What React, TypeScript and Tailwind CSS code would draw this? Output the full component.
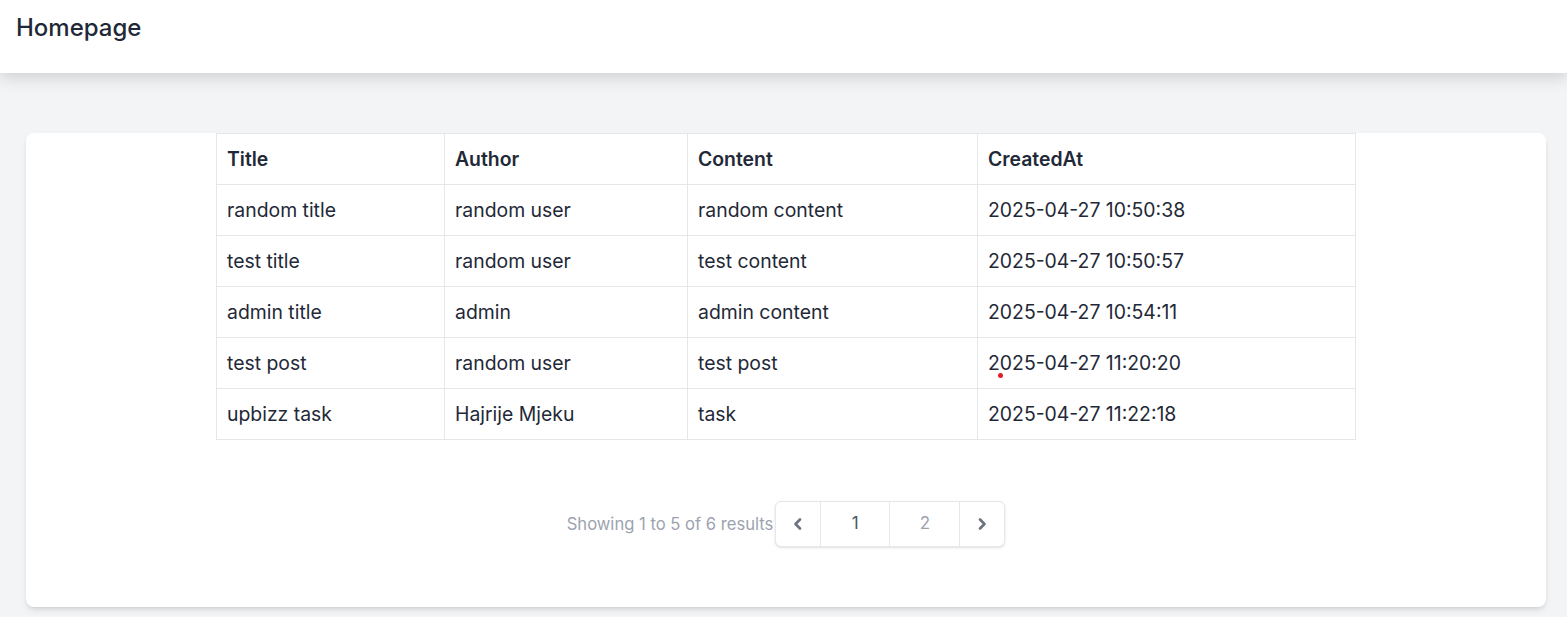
import React from 'react';

type Post = {
    title: string;
    author: string;
    content: string;
    createdAt: string;
};

const posts: Post[] = [
    { title: 'random title', author: 'random user', content: 'random content', createdAt: '2025-04-27 10:50:38' },
    { title: 'test title', author: 'random user', content: 'test content', createdAt: '2025-04-27 10:50:57' },
    { title: 'admin title', author: 'admin', content: 'admin content', createdAt: '2025-04-27 10:54:11' },
    { title: 'test post', author: 'random user', content: 'test post', createdAt: '2025-04-27 11:20:20' },
    { title: 'upbizz task', author: 'Hajrije Mjeku', content: 'task', createdAt: '2025-04-27 11:22:18' },
];

const cell = 'border border-[#e5e7eb] px-[10px] py-3 leading-[26px] text-left';

function Chevron({ dir }: { dir: 'left' | 'right' }) {
    return (
        <svg viewBox="0 0 20 20" fill="none" stroke="currentColor" strokeWidth={2.6} strokeLinecap="round" strokeLinejoin="round" className="w-5 h-5">
            {dir === 'left' ? <path d="M12 5.5 7.5 10l4.5 4.5" /> : <path d="M8 5.5l4.5 4.5L8 14.5" />}
        </svg>
    );
}

export default function App() {
    return (
        <div className="min-h-screen bg-[#f3f4f6] text-[#1f2937]" style={{ fontFamily: 'Inter, "Noto Sans", sans-serif' }}>
            {/* Header */}
            <header className="relative z-10 bg-white shadow-[0_4px_16px_rgba(0,0,0,0.16)]">
                <div className="h-[73px] px-4 pt-3">
                    <h2 className="text-2xl font-medium leading-8 text-[#1f2937]">Homepage</h2>
                </div>
            </header>

            <main className="pl-[26px] pr-[21px] pt-[60px]">
                <div className="relative bg-white rounded-lg shadow-md overflow-hidden">
                    <table className="w-[1140px] mx-auto border-collapse text-[19.4px] text-[#1f2937] table-fixed">
                        <colgroup>
                            <col className="w-[228px]" />
                            <col className="w-[243px]" />
                            <col className="w-[290px]" />
                            <col />
                        </colgroup>
                        <thead>
                            <tr>
                                <th className={`${cell} font-semibold`}>Title</th>
                                <th className={`${cell} font-semibold`}>Author</th>
                                <th className={`${cell} font-semibold`}>Content</th>
                                <th className={`${cell} font-semibold`}>CreatedAt</th>
                            </tr>
                        </thead>
                        <tbody>
                            {posts.map((p) => (
                                <tr key={p.createdAt}>
                                    <td className={`${cell} font-normal`}>{p.title}</td>
                                    <td className={`${cell} font-normal`}>{p.author}</td>
                                    <td className={`${cell} font-normal`}>{p.content}</td>
                                    <td className={`${cell} font-normal`}>{p.createdAt}</td>
                                </tr>
                            ))}
                        </tbody>
                    </table>

                    {/* Pagination */}
                    <div className="flex items-center justify-center mt-[61px] mb-[60px]">
                        <p className="text-[16.6px] text-[#9ca3af] leading-6">Showing 1 to 5 of 6 results</p>
                        <nav className="ml-[2px] flex items-stretch h-[46px] border border-[#e5e7eb] rounded-md shadow-sm bg-white">
                            <button className="w-[44px] flex items-center justify-center text-[#6b7280]">
                                <Chevron dir="left" />
                            </button>
                            <span className="w-[69px] flex items-center justify-center border-l border-[#e5e7eb] text-[17px] text-[#4b5563]">1</span>
                            <span className="w-[70px] flex items-center justify-center border-l border-[#e5e7eb] text-[17px] text-[#9ca3af]">2</span>
                            <button className="w-[45px] flex items-center justify-center border-l border-[#e5e7eb] text-[#6b7280]">
                                <Chevron dir="right" />
                            </button>
                        </nav>
                    </div>

                    {/* stray cursor dot from the screenshot */}
                    <span className="absolute left-[972px] top-[240px] w-[5px] h-[5px] rounded-full bg-[#e11d2a]" />
                </div>
            </main>
        </div>
    );
}
